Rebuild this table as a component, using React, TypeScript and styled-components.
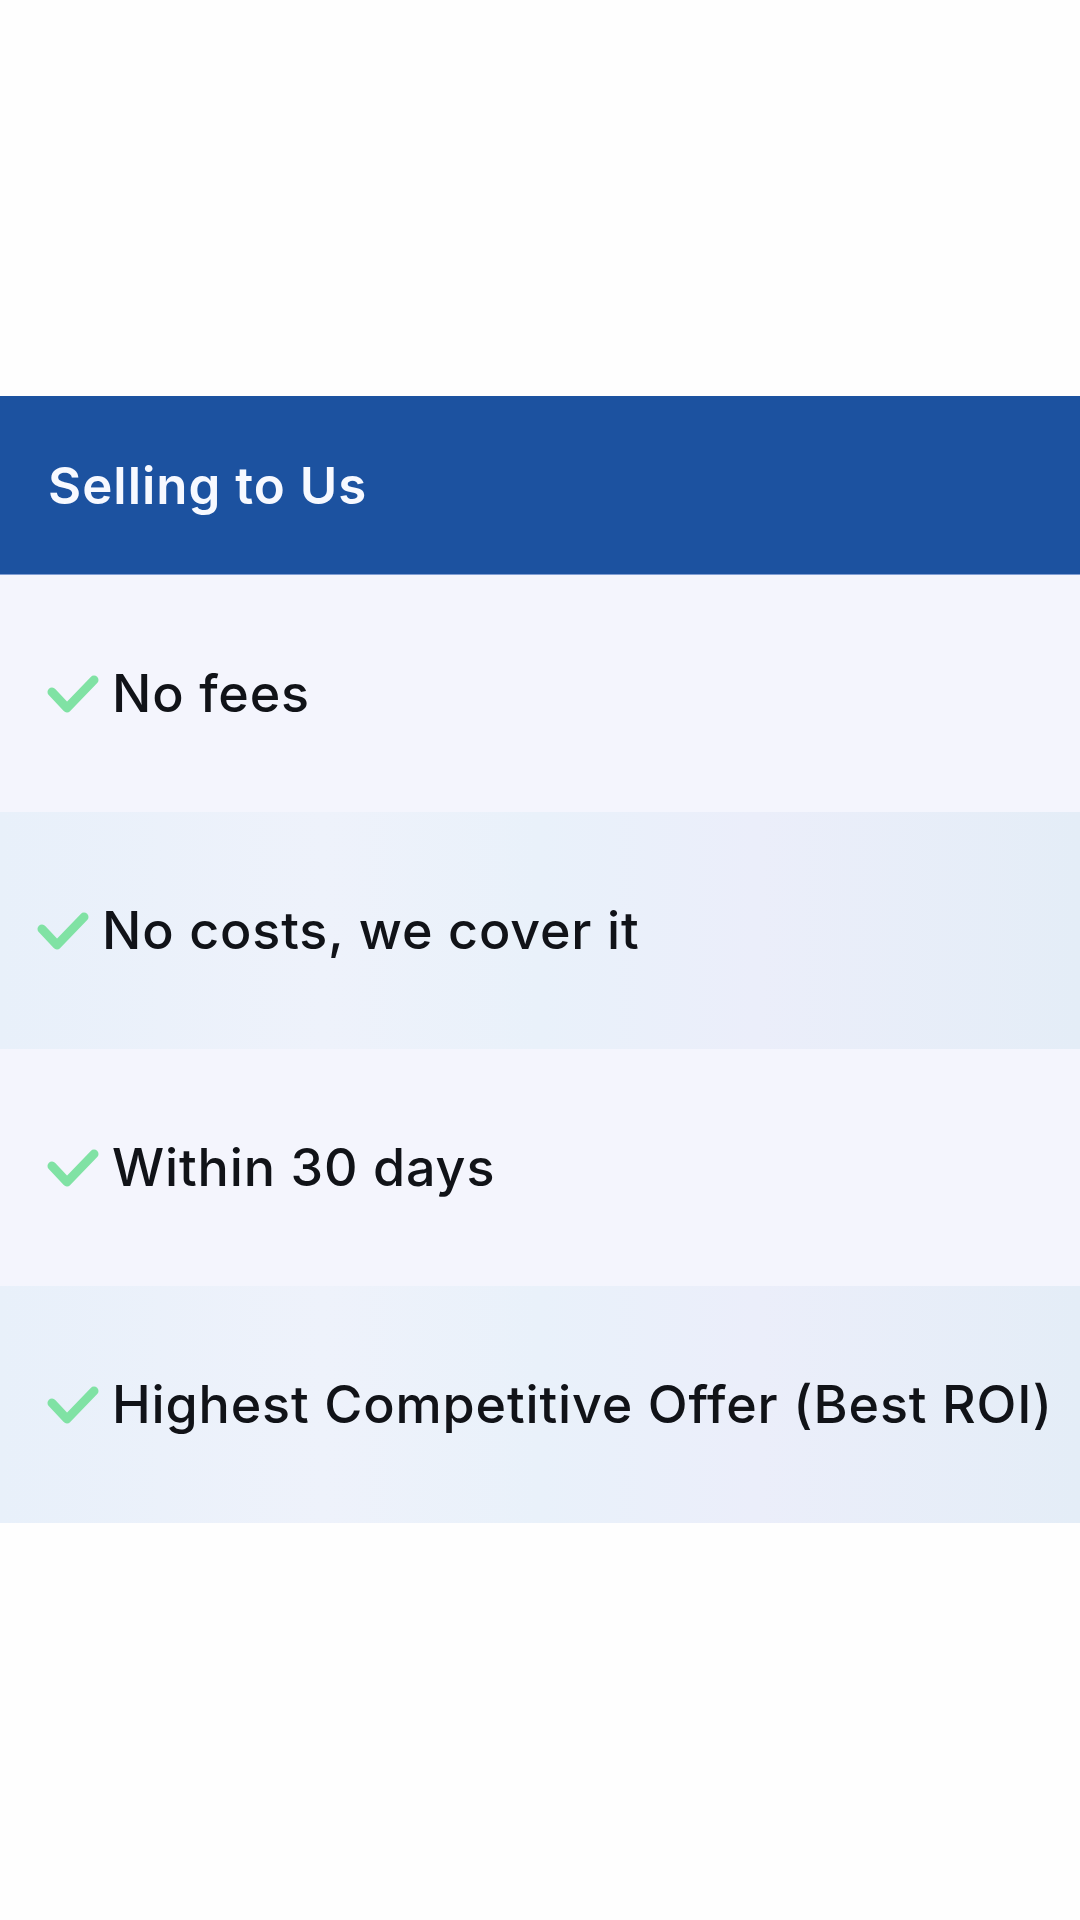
import * as React from "react";
import styled, { createGlobalStyle } from "styled-components";

type Perk = {
  label: string;
  shifted?: boolean;
};

const PERKS: Perk[] = [
  { label: "No fees" },
  { label: "No costs, we cover it", shifted: true },
  { label: "Within 30 days" },
  { label: "Highest Competitive Offer (Best ROI)" },
];

const CheckMark: React.FC = () => (
  <CheckIcon viewBox="0 0 54 42" aria-hidden="true">
    <path
      d="M6 19 L21 35 L48 7"
      fill="none"
      stroke="#80e2a4"
      strokeWidth="9"
      strokeLinecap="round"
      strokeLinejoin="round"
    />
  </CheckIcon>
);

const App: React.FC = () => {
  return (
    <>
      <GlobalStyle />
      <Page>
        <Table>
          <Header>
            <Title>Selling to Us</Title>
          </Header>
          {PERKS.map((perk, index) => (
            <Row key={perk.label} $striped={index % 2 === 1}>
              <Item $shifted={perk.shifted}>
                <CheckMark />
                <Label>{perk.label}</Label>
              </Item>
            </Row>
          ))}
        </Table>
      </Page>
    </>
  );
};

export default App;

const GlobalStyle = createGlobalStyle`
  html, body {
    margin: 0;
    padding: 0;
    background: #fefefe;
  }

  body {
    font-family: Inter, "Open Sans", sans-serif;
  }
`;

const Page = styled.main`
  width: 1080px;
  min-height: 1920px;
  padding-top: 396px;
  box-sizing: border-box;
`;

const Table = styled.section`
  display: flex;
  flex-direction: column;
`;

const Header = styled.div`
  height: 179px;
  display: flex;
  align-items: center;
  padding-left: 48px;
  background: #1c52a0;
  border-bottom: 1px solid #7f9dd3;
  box-sizing: border-box;
`;

const Title = styled.h2`
  margin: 0;
  color: #f7f9ff;
  font-size: 51px;
  font-weight: 600;
  letter-spacing: 1px;
`;

const Row = styled.div<{ $striped: boolean }>`
  height: 237px;
  display: flex;
  align-items: center;
  background: ${(p) =>
    p.$striped
      ? "linear-gradient(90deg, #e8f0fa 0%, #eef2fb 30%, #e9f1fa 50%, #ebeefa 70%, #e4edf7 100%)"
      : "#f4f5fd"};
`;

const Item = styled.div<{ $shifted?: boolean }>`
  display: flex;
  align-items: center;
  gap: 12px;
  padding-left: ${(p) => (p.$shifted ? "36px" : "46px")};
`;

const CheckIcon = styled.svg`
  width: 54px;
  height: 42px;
  flex-shrink: 0;
`;

const Label = styled.span`
  color: #111318;
  font-size: 52px;
  font-weight: 500;
  letter-spacing: 0.85px;
`;
